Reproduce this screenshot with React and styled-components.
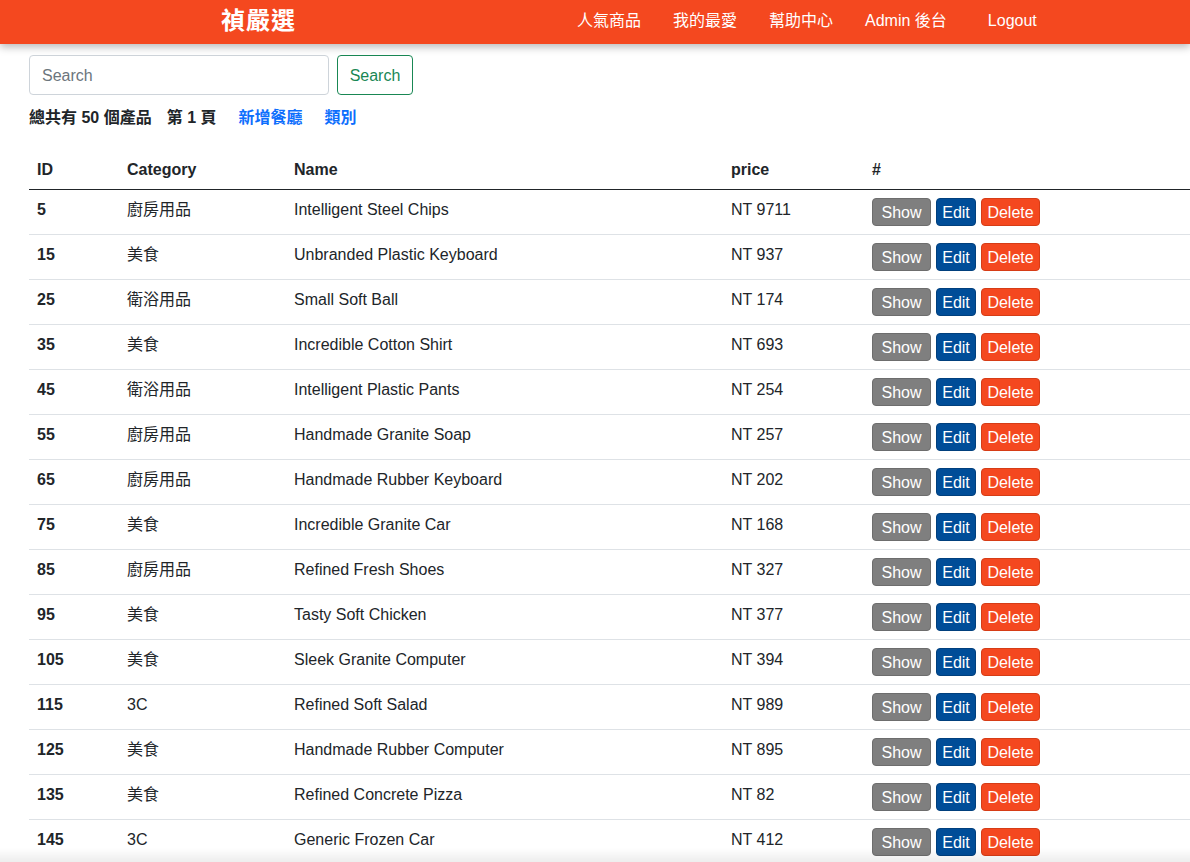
import React from 'react';
import styled, { createGlobalStyle } from 'styled-components';

const products = [
   { id: 5, category: '廚房用品', name: 'Intelligent Steel Chips', price: 9711 },
   { id: 15, category: '美食', name: 'Unbranded Plastic Keyboard', price: 937 },
   { id: 25, category: '衛浴用品', name: 'Small Soft Ball', price: 174 },
   { id: 35, category: '美食', name: 'Incredible Cotton Shirt', price: 693 },
   { id: 45, category: '衛浴用品', name: 'Intelligent Plastic Pants', price: 254 },
   { id: 55, category: '廚房用品', name: 'Handmade Granite Soap', price: 257 },
   { id: 65, category: '廚房用品', name: 'Handmade Rubber Keyboard', price: 202 },
   { id: 75, category: '美食', name: 'Incredible Granite Car', price: 168 },
   { id: 85, category: '廚房用品', name: 'Refined Fresh Shoes', price: 327 },
   { id: 95, category: '美食', name: 'Tasty Soft Chicken', price: 377 },
   { id: 105, category: '美食', name: 'Sleek Granite Computer', price: 394 },
   { id: 115, category: '3C', name: 'Refined Soft Salad', price: 989 },
   { id: 125, category: '美食', name: 'Handmade Rubber Computer', price: 895 },
   { id: 135, category: '美食', name: 'Refined Concrete Pizza', price: 82 },
   { id: 145, category: '3C', name: 'Generic Frozen Car', price: 412 },
   { id: 155, category: '衛浴用品', name: 'Practical Wooden Table', price: 530 },
];

const navLinks = ['人氣商品', '我的最愛', '幫助中心', 'Admin 後台'];

function App() {
   return (
      <>
         <GlobalStyle />
         <Navbar>
            <Brand>禎嚴選</Brand>
            <NavLinks>
               {navLinks.map((link) => (
                  <NavLink key={link}>{link}</NavLink>
               ))}
               <NavLink logout>Logout</NavLink>
            </NavLinks>
         </Navbar>
         <Main>
            <SearchForm>
               <SearchInput placeholder="Search" />
               <SearchButton>Search</SearchButton>
            </SearchForm>
            <Summary>
               <span>總共有 50 個產品</span>
               <span>第 1 頁</span>
               <Link>新增餐廳</Link>
               <Link>類別</Link>
            </Summary>
            <Table>
               <colgroup>
                  <col style={{ width: 90 }} />
                  <col style={{ width: 167 }} />
                  <col style={{ width: 437 }} />
                  <col style={{ width: 141 }} />
                  <col />
               </colgroup>
               <thead>
                  <tr>
                     <Th>ID</Th>
                     <Th>Category</Th>
                     <Th>Name</Th>
                     <Th>price</Th>
                     <Th>#</Th>
                  </tr>
               </thead>
               <tbody>
                  {products.map((p) => (
                     <tr key={p.id}>
                        <Td bold>{p.id}</Td>
                        <Td>{p.category}</Td>
                        <Td>{p.name}</Td>
                        <Td>NT {p.price}</Td>
                        <Td>
                           <Actions>
                              <ActionButton variant="show">Show</ActionButton>
                              <ActionButton variant="edit">Edit</ActionButton>
                              <ActionButton variant="delete">Delete</ActionButton>
                           </Actions>
                        </Td>
                     </tr>
                  ))}
               </tbody>
            </Table>
         </Main>
         <BottomShade />
      </>
   );
}

export default App;

const GlobalStyle = createGlobalStyle`
   * {
      box-sizing: border-box;
   }
   body {
      margin: 0;
      background: #fff;
      color: #212529;
      font-family: "Liberation Sans", "Noto Sans CJK TC", sans-serif;
      font-size: 16px;
      line-height: 1.5;
      overflow: hidden;
   }
`;

const Navbar = styled.header`
   position: relative;
   z-index: 2;
   height: 44px;
   background: #f4481f;
   display: flex;
   align-items: center;
   padding-left: 221px;
   padding-bottom: 2px;
   box-shadow: 0 3px 8px rgba(0, 0, 0, 0.28);
`;

const Brand = styled.div`
   color: #fff;
   font-size: 24px;
   font-weight: 700;
   letter-spacing: 1px;
   width: 356px;
`;

const NavLinks = styled.nav`
   display: flex;
   align-items: center;
   gap: 32px;
`;

const NavLink = styled.a`
   color: #fff;
   font-size: 16px;
   margin-left: ${(p) => (p.logout ? '9px' : '0')};
   cursor: pointer;
`;

const Main = styled.main`
   padding: 11px 0 0 29px;
`;

const SearchForm = styled.form`
   display: flex;
   gap: 8px;
`;

const SearchInput = styled.input`
   width: 300px;
   height: 40px;
   padding: 6px 12px 4px;
   border: 1px solid #ced4da;
   border-radius: 4px;
   font-family: inherit;
   font-size: 16px;
   color: #212529;
   &::placeholder {
      color: #6c757d;
   }
`;

const SearchButton = styled.button`
   height: 40px;
   width: 76px;
   padding: 2px 0 0;
   border: 1px solid #198754;
   border-radius: 4px;
   background: #fff;
   color: #198754;
   font-family: inherit;
   font-size: 16px;
`;

const Summary = styled.div`
   display: flex;
   gap: 15px;
   margin-top: 11px;
   font-weight: 700;
   font-size: 16px;
   line-height: 24px;
`;

const Link = styled.a`
   color: #0d6efd;
   margin-left: 7px;
   cursor: pointer;
`;

const Table = styled.table`
   width: calc(100vw - 29px);
   margin-top: 21px;
   border-collapse: collapse;
   table-layout: fixed;
`;

const Th = styled.th`
   text-align: left;
   padding: 7px 8px 7px;
   font-weight: 700;
   border-bottom: 1px solid #212529;
`;

const Td = styled.td`
   padding: 7px 8px 8px;
   border-bottom: 1px solid #dee2e6;
   font-weight: ${(p) => (p.bold ? 700 : 400)};
   vertical-align: top;
   line-height: 26px;
`;

const Actions = styled.div`
   display: flex;
   gap: 5px;
   padding-top: 1px;
`;

const buttonStyles = {
   show: { bg: '#7f7f7f', border: '#6d6d6d', width: 59 },
   edit: { bg: '#004d98', border: '#003f7d', width: 40 },
   delete: { bg: '#f4481f', border: '#d63c16', width: 59 },
};

const ActionButton = styled.button`
   width: ${(p) => buttonStyles[p.variant].width}px;
   height: 28px;
   padding: 1px 0 0;
   border: 1px solid ${(p) => buttonStyles[p.variant].border};
   border-radius: 4px;
   background: ${(p) => buttonStyles[p.variant].bg};
   color: #fff;
   font-family: inherit;
   font-size: 16px;
   line-height: 26px;
   text-align: center;
`;

const BottomShade = styled.div`
   position: fixed;
   left: 0;
   right: 0;
   bottom: 0;
   height: 14px;
   background: linear-gradient(to bottom, rgba(0, 0, 0, 0), rgba(0, 0, 0, 0.07));
   pointer-events: none;
`;
